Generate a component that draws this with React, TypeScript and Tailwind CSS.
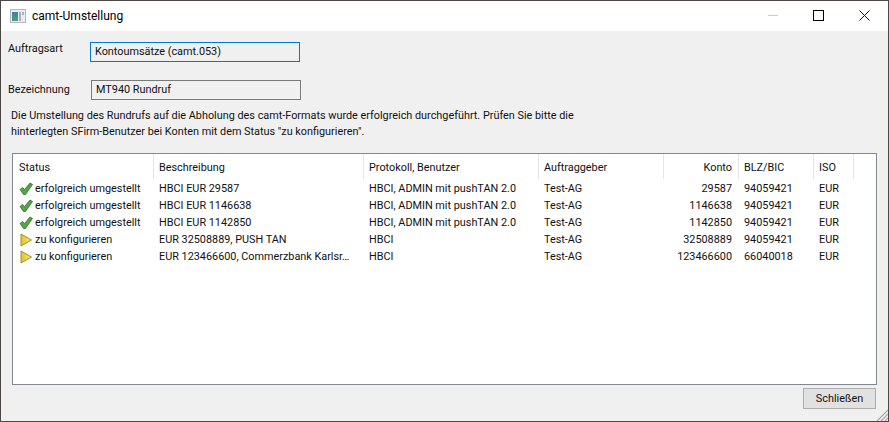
const FONT = "font-['Roboto','Noto_Sans',sans-serif]";

const COLS = "grid grid-cols-[141px_210px_175px_125px_75px_75px_40px_1fr]";

const HEAD = [
  { t: "Status", c: "pl-[6px]" },
  { t: "Beschreibung", c: "pl-[5px]" },
  { t: "Protokoll, Benutzer", c: "pl-[5px]" },
  { t: "Auftraggeber", c: "pl-[5px]" },
  { t: "Konto", c: "justify-end pr-[6px]" },
  { t: "BLZ/BIC", c: "pl-[5px]" },
  { t: "ISO", c: "pl-[5px]" },
];

const ROWS = [
  { ok: true, s: "erfolgreich umgestellt", d: "HBCI EUR 29587", p: "HBCI, ADMIN mit pushTAN 2.0", k: "29587", b: "94059421" },
  { ok: true, s: "erfolgreich umgestellt", d: "HBCI EUR 1146638", p: "HBCI, ADMIN mit pushTAN 2.0", k: "1146638", b: "94059421" },
  { ok: true, s: "erfolgreich umgestellt", d: "HBCI EUR 1142850", p: "HBCI, ADMIN mit pushTAN 2.0", k: "1142850", b: "94059421" },
  { ok: false, s: "zu konfigurieren", d: "EUR 32508889, PUSH TAN", p: "HBCI", k: "32508889", b: "94059421" },
  { ok: false, s: "zu konfigurieren", d: "EUR 123466600, Commerzbank Karlsr…", p: "HBCI", k: "123466600", b: "66040018" },
];

function Check() {
  return (
    <svg width="14" height="14" viewBox="0 0 14 14" className="shrink-0">
      <path d="M1 7.5 L3.5 5.5 L5.5 7.5 L11 1 L13.5 2.5 L6.5 12.5 L4.5 12.5 Z" fill="#55a545" stroke="#2f6f35" strokeWidth="0.8" strokeLinejoin="round" />
    </svg>
  );
}

function Play() {
  return (
    <svg width="14" height="14" viewBox="0 0 14 14" className="shrink-0">
      <defs>
        <linearGradient id="play" x1="0" y1="0" x2="1" y2="0">
          <stop offset="0" stopColor="#e2c22e" />
          <stop offset="1" stopColor="#f8ea62" />
        </linearGradient>
      </defs>
      <path d="M2 1 L12.5 7 L2 13 Z" fill="url(#play)" stroke="#a0902e" strokeWidth="1" strokeLinejoin="round" />
    </svg>
  );
}

function AppIcon() {
  return (
    <svg width="16" height="14" viewBox="0 0 16 14">
      <defs>
        <linearGradient id="pane" x1="0" y1="0" x2="0" y2="1">
          <stop offset="0" stopColor="#3f7fa8" />
          <stop offset="1" stopColor="#4f9f7a" />
        </linearGradient>
      </defs>
      <rect x="0.5" y="0.5" width="15" height="13" fill="#e8ecee" stroke="#b4b9bc" />
      <rect x="2" y="3" width="6" height="9" fill="url(#pane)" />
      <rect x="9" y="3" width="2" height="9" fill="#a8b0b4" />
      <rect x="12" y="3" width="2" height="3" fill="#9fb6c6" />
    </svg>
  );
}

export default function App() {
  return (
    <div className={`${FONT} relative w-[889px] h-[422px] flex flex-col bg-[#f0f0f0] border border-[#4d4845] text-[10.85px] leading-[14px] text-[#111] overflow-hidden`}>
      {/* Title bar */}
      <div className="h-[30px] shrink-0 bg-white flex items-center pl-[9px]">
        <AppIcon />
        <span className="ml-[6px] text-[12px] text-black">camt-Umstellung</span>
        <div className="ml-auto flex items-center pr-[18px] gap-[35px] mb-[1px]">
          <div className="w-[10px] h-px bg-[#ccc]" />
          <div className="w-[11px] h-[11px] border border-black" />
          <svg width="11" height="11" viewBox="0 0 11 11">
            <path d="M0.5 0.5 L10.5 10.5 M10.5 0.5 L0.5 10.5" stroke="#111" strokeWidth="1" />
          </svg>
        </div>
      </div>

      {/* Form */}
      <div className="flex items-start mt-[11px] pl-[7px]">
        <span className="w-[82px]">Auftragsart</span>
        <div className="w-[210px] h-[20px] border border-[#0078d7] pl-[4px] flex items-center">Kontoumsätze (camt.053)</div>
      </div>
      <div className="flex items-center mt-[18px] pl-[7px]">
        <span className="w-[83px]">Bezeichnung</span>
        <div className="w-[210px] h-[20px] border border-[#7a7a7a] pl-[4px] flex items-center">MT940 Rundruf</div>
      </div>
      <p className="mt-[8px] ml-[10px] whitespace-nowrap leading-[16px]">
        Die Umstellung des Rundrufs auf die Abholung des camt-Formats wurde erfolgreich durchgeführt. Prüfen Sie bitte die
        <br />
        hinterlegten SFirm-Benutzer bei Konten mit dem Status "zu konfigurieren".
      </p>

      {/* Table */}
      <div className="mt-[13px] ml-[11px] w-[865px] h-[232px] shrink-0 bg-white border border-[#828790]">
        <div className={`${COLS} h-[25px]`}>
          {HEAD.map((h) => (
            <div key={h.t} className={`${h.c} pt-[2px] flex items-center border-r border-[#e5e5e5]`}>
              {h.t}
            </div>
          ))}
        </div>
        {ROWS.map((r) => (
          <div key={r.d} className={`${COLS} h-[17px] items-center pt-[2px]`}>
            <div className="pl-[6px] flex items-center gap-[2px] whitespace-nowrap">
              {r.ok ? <Check /> : <Play />}
              <span>{r.s}</span>
            </div>
            <div className="pl-[5px] whitespace-nowrap">{r.d}</div>
            <div className="pl-[5px] whitespace-nowrap">{r.p}</div>
            <div className="pl-[5px]">Test-AG</div>
            <div className="pr-[7px] text-right">{r.k}</div>
            <div className="pl-[5px]">{r.b}</div>
            <div className="pl-[5px]">EUR</div>
          </div>
        ))}
      </div>

      {/* Footer */}
      <div className="flex justify-end mt-[3px] mr-[12px]">
        <button className="w-[73px] h-[21px] bg-[#e1e1e1] border border-[#adadad] text-center">Schließen</button>
      </div>

      {/* Resize grip */}
      <svg width="12" height="12" viewBox="0 0 12 12" className="absolute right-0 bottom-0">
        <path d="M12 1 L1 12 M12 5 L5 12 M12 9 L9 12" stroke="#a8a8a8" strokeWidth="1.2" />
      </svg>
    </div>
  );
}
